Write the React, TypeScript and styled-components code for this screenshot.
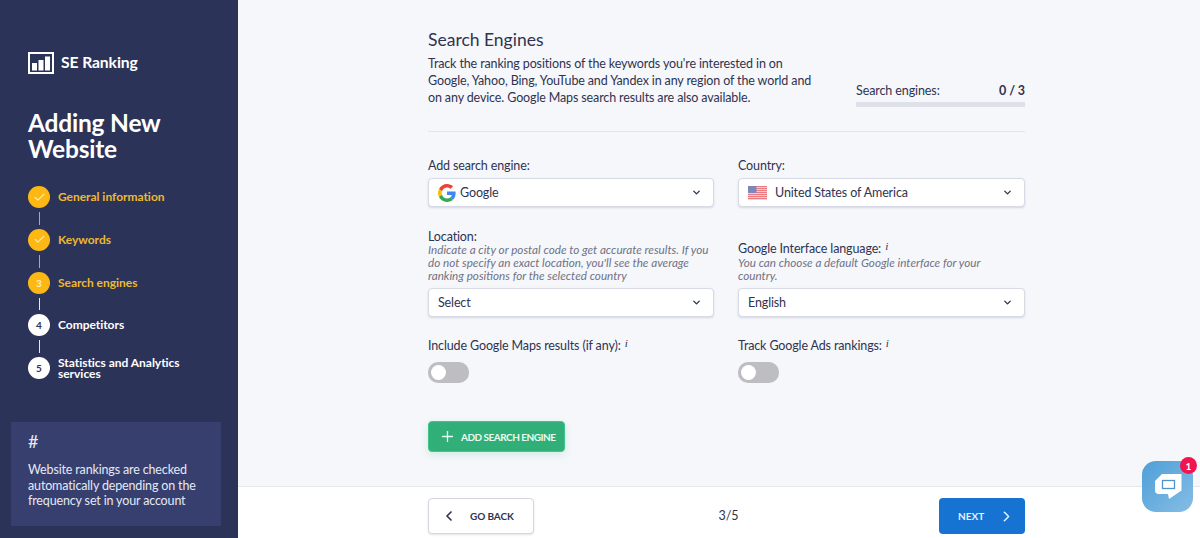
import React from 'react';
import styled, { createGlobalStyle } from 'styled-components';
import { ChevronDown, ChevronLeft, ChevronRight, Check, Plus } from 'lucide-react';

const GlobalStyle = createGlobalStyle`
  html, body, #root {
    height: 100%;
    margin: 0;
  }

  body {
    color: #2f3350;
    font-family: Lato, "Open Sans", sans-serif;
    overflow: hidden;
  }

  * {
    box-sizing: border-box;
  }
`;

const Page = styled.div`
  display: flex;
  height: 538px;
  position: relative;
  width: 1200px;
`;

const Sidebar = styled.aside`
  background: #2c3359;
  display: flex;
  flex: 0 0 238px;
  flex-direction: column;
  padding: 52px 17px 12px 11px;
`;

const Logo = styled.div`
  align-items: center;
  color: #fff;
  display: flex;
  font-size: 15.7px;
  font-weight: 700;
  gap: 7px;
  height: 22px;
  letter-spacing: -0.1px;
  margin-left: 17px;

  span {
    margin-top: -3px;
  }
`;

const Title = styled.h1`
  color: #fff;
  font-size: 24.5px;
  font-weight: 700;
  letter-spacing: -0.2px;
  line-height: 26px;
  margin: 36px 0 24px 17px;
`;

const Steps = styled.div`
  display: flex;
  flex-direction: column;
  margin-left: 17px;
`;

const Step = styled.div`
  align-items: center;
  display: flex;
  gap: 8px;
  height: 22px;
`;

const Bullet = styled.div<{ $active: boolean }>`
  align-items: center;
  background: ${(p) => (p.$active ? '#fdb813' : '#fff')};
  border-radius: 50%;
  color: ${(p) => (p.$active ? '#ffeec4' : '#2f3350')};
  display: flex;
  flex: 0 0 22px;
  font-size: 10px;
  font-weight: 700;
  height: 22px;
  justify-content: center;
`;

const StepLabel = styled.div<{ $active: boolean }>`
  color: ${(p) => (p.$active ? '#edb92f' : '#fff')};
  font-size: 12px;
  font-weight: 700;
  letter-spacing: -0.03px;
  line-height: 11px;
  margin-top: -1px;
`;

const Connector = styled.div<{ $active: boolean }>`
  background: ${(p) => (p.$active ? '#d9a92f' : '#e6e8f0')};
  height: 12.75px;
  margin: 4px 0 4px 10.5px;
  width: 1px;
`;

const InfoBox = styled.div`
  background: #363f6e;
  color: #e6e9f4;
  font-size: 12.5px;
  height: 104px;
  letter-spacing: -0.15px;
  line-height: 15.5px;
  margin-top: auto;
  padding: 9px 10px 0 17px;
  width: 210px;
`;

const Hash = styled.div`
  font-size: 18px;
  line-height: 20px;
  margin-bottom: 11px;
`;

const Main = styled.main`
  background: #f6f7fb;
  display: flex;
  flex: 1;
  flex-direction: column;
`;

const Content = styled.div`
  flex: 1;
  padding: 29px 0 0 190px;
  width: 787px;
`;

const Heading = styled.h2`
  font-size: 17.5px;
  font-weight: 400;
  line-height: 22px;
  margin: 0 0 4px;
`;

const Intro = styled.div`
  align-items: flex-end;
  border-bottom: 1px solid #e3e4ea;
  display: flex;
  justify-content: space-between;
  padding-bottom: 25px;
`;

const IntroText = styled.p`
  font-size: 12.5px;
  letter-spacing: -0.13px;
  line-height: 17px;
  margin: 0;
  width: 390px;
`;

const Quota = styled.div`
  font-size: 12.5px;
  letter-spacing: -0.1px;
  margin-bottom: -1px;
  width: 169px;
`;

const QuotaRow = styled.div`
  display: flex;
  justify-content: space-between;
  line-height: 16px;
  margin-bottom: 3px;

  b {
    font-weight: 700;
  }
`;

const QuotaBar = styled.div`
  background: #dfe1ea;
  height: 5px;
`;

const Fields = styled.div`
  display: grid;
  gap: 0 24px;
  grid-template-columns: 286px 287px;
`;

const Field = styled.div<{ $top: number; $height: number }>`
  display: flex;
  flex-direction: column;
  height: ${(p) => p.$height}px;
  justify-content: flex-end;
  margin-top: ${(p) => p.$top}px;
`;

const Label = styled.label`
  font-size: 12.5px;
  letter-spacing: -0.13px;
  line-height: 13px;
`;

const Hint = styled.span`
  color: #6f7285;
  font-size: 11.7px;
  font-style: italic;
  line-height: 13px;
  margin-bottom: 2px;
  max-width: 284px;
`;

const InfoMark = styled.i`
  font-family: "Liberation Serif", serif;
  font-size: 11px;
  margin-left: 4px;
  position: relative;
  top: -3px;
`;

const Select = styled.div`
  align-items: center;
  background: #fff;
  border: 1px solid #d8dae6;
  border-radius: 4px;
  box-shadow: 0 1px 2px rgba(60, 66, 100, 0.18);
  display: flex;
  font-size: 12.5px;
  height: 29px;
  letter-spacing: -0.13px;
  margin-top: 4px;
  padding: 0 11px 0 9px;

  ${Label} + & {
    margin-top: 6px;
  }

  svg.chevron {
    color: #2f3350;
    margin-left: auto;
  }
`;

const SelectIcon = styled.svg<{ $gap: number }>`
  flex: none;
  margin-right: ${(p) => p.$gap}px;
`;

const ToggleField = styled.div`
  font-size: 12.5px;
  height: 83px;
  letter-spacing: -0.13px;
  margin-top: 21px;
`;

const Toggle = styled.div`
  background: #bdbdc2;
  border-radius: 10px;
  height: 21px;
  margin-top: 9px;
  padding: 3px;
  width: 41px;

  &::before {
    background: #fff;
    border-radius: 50%;
    content: '';
    display: block;
    height: 15px;
    width: 15px;
  }
`;

const AddButton = styled.button`
  align-items: center;
  background: #30af78;
  border: 1px solid #3fc48c;
  border-radius: 4px;
  box-shadow: 0 3px 8px rgba(48, 175, 120, 0.18);
  color: #e9fbf2;
  display: flex;
  font-family: inherit;
  font-size: 10px;
  font-weight: 700;
  gap: 5px;
  height: 31px;
  letter-spacing: -0.5px;
  padding: 0 0 0 10px;
  white-space: nowrap;
  width: 137px;
`;

const Footer = styled.footer`
  align-items: flex-start;
  background: #fff;
  border-top: 1px solid #e8e8ec;
  display: flex;
  flex: 0 0 52px;
  justify-content: space-between;
  padding: 11px 175px 0 190px;
`;

const BackButton = styled.button`
  align-items: center;
  background: #fff;
  border: 1px solid #d6d7de;
  border-radius: 4px;
  box-shadow: 0 1px 2px rgba(60, 66, 100, 0.15);
  color: #2f3350;
  display: flex;
  font-family: inherit;
  font-size: 10px;
  font-weight: 700;
  gap: 13px;
  height: 36px;
  letter-spacing: -0.1px;
  padding: 0 0 0 12px;
  width: 106px;
`;

const Counter = styled.div`
  font-size: 12.5px;
  line-height: 36px;
  margin-left: -16px;
`;

const NextButton = styled.button`
  align-items: center;
  background: #1673d2;
  border: 0;
  border-radius: 4px;
  color: #e4f0ff;
  display: flex;
  font-family: inherit;
  font-size: 10px;
  font-weight: 700;
  gap: 14px;
  height: 36px;
  padding: 0 0 0 19px;
  width: 86px;
`;

const Chat = styled.div`
  align-items: center;
  background: linear-gradient(135deg, #4f9fd8, #85bde6);
  border-radius: 14px;
  bottom: 26px;
  display: flex;
  height: 51px;
  justify-content: center;
  position: absolute;
  right: 7px;
  width: 51px;
`;

const Badge = styled.div`
  align-items: center;
  background: #f0144f;
  border-radius: 50%;
  color: #fff;
  display: flex;
  font-size: 10px;
  font-weight: 700;
  height: 17px;
  justify-content: center;
  position: absolute;
  right: -4px;
  top: -4px;
  width: 17px;
`;

const steps = [
  { label: 'General information', mark: 'check', active: true },
  { label: 'Keywords', mark: 'check', active: true },
  { label: 'Search engines', mark: '3', active: true },
  { label: 'Competitors', mark: '4', active: false },
  { label: 'Statistics and Analytics services', mark: '5', active: false }
];

const LogoMark = () => (
  <svg width='26' height='22' viewBox='0 0 26 22'>
    <rect x='1' y='1' width='24' height='20' fill='none' stroke='#fff' strokeWidth='2' />
    <rect x='4' y='11' width='5' height='7.500' fill='#fff' />
    <rect x='10.500' y='8' width='5' height='10.500' fill='#fff' />
    <rect x='17' y='4.500' width='5' height='14' fill='#fff' />
  </svg>
);

const GoogleMark = () => (
  <SelectIcon $gap={4} width='18' height='18' viewBox='0 0 48 48'>
    <path fill='#ea4335' d='M24 9.500c3.500 0 6.700 1.200 9.200 3.600l6.900-6.900C35.900 2.400 30.500 0 24 0 14.600 0 6.500 5.400 2.600 13.200l8 6.200C12.500 13.700 17.800 9.500 24 9.500z' />
    <path fill='#4285f4' d='M47 24.500c0-1.600-.1-3.100-.4-4.500H24v9h12.900c-.6 3-2.200 5.500-4.700 7.200l7.700 6C44.400 37.900 47 31.800 47 24.500z' />
    <path fill='#fbbc05' d='M10.600 28.600c-.5-1.400-.8-3-.8-4.600s.3-3.200.8-4.600l-8-6.200C.9 16.500 0 20.100 0 24s.9 7.500 2.600 10.800l8-6.200z' />
    <path fill='#34a853' d='M24 48c6.500 0 11.900-2.100 15.900-5.800l-7.700-6c-2.200 1.400-4.900 2.300-8.200 2.300-6.200 0-11.500-4.200-13.400-9.900l-8 6.200C6.500 42.600 14.600 48 24 48z' />
  </SelectIcon>
);

const FlagMark = () => (
  <SelectIcon $gap={8} width='19' height='14' viewBox='0 0 19 14'>
    <rect width='19' height='14' fill='#f4f4f6' />
    {[0, 2, 4, 6, 8, 10, 12].map((y) => (
      <rect key={y} y={y} width='19' height='1.300' fill='#ea7a82' />
    ))}
    <rect width='8.500' height='7' fill='#7d88ba' />
  </SelectIcon>
);

const ChatMark = () => (
  <svg width='28' height='27' viewBox='0 0 28 27'>
    <path fill='#fff' d='M8 1h19.500v16.500L15 26l-1-5H4.500C2.500 21 1 19.500 1 17.500V8z' />
    <rect x='8.500' y='7.500' width='12' height='8' fill='none' stroke='#4f93c8' strokeWidth='1.300' />
  </svg>
);

const Chevron = () => <ChevronDown className='chevron' size={11} strokeWidth={3} />;

export default function App () {
  return (
    <Page>
      <GlobalStyle />
      <Sidebar>
        <Logo>
          <LogoMark />
          <span>SE Ranking</span>
        </Logo>
        <Title>Adding New<br />Website</Title>
        <Steps>
          {steps.map((step, index) => (
            <React.Fragment key={step.label}>
              <Step>
                <Bullet $active={step.active}>
                  {step.mark === 'check' ? <Check size={13} strokeWidth={2} /> : step.mark}
                </Bullet>
                <StepLabel $active={step.active}>{step.label}</StepLabel>
              </Step>
              {index < steps.length - 1 && <Connector $active={index < 2} />}
            </React.Fragment>
          ))}
        </Steps>
        <InfoBox>
          <Hash>#</Hash>
          Website rankings are checked automatically depending on the frequency set in your account
        </InfoBox>
      </Sidebar>
      <Main>
        <Content>
          <Heading>Search Engines</Heading>
          <Intro>
            <IntroText>
              Track the ranking positions of the keywords you're interested in on Google, Yahoo, Bing, YouTube and Yandex in any region of the world and on any device. Google Maps search results are also available.
            </IntroText>
            <Quota>
              <QuotaRow>
                <span>Search engines:</span>
                <b>0 / 3</b>
              </QuotaRow>
              <QuotaBar />
            </Quota>
          </Intro>
          <Fields>
            <Field $top={21} $height={54}>
              <Label>Add search engine:</Label>
              <Select>
                <GoogleMark />
                Google
                <Chevron />
              </Select>
            </Field>
            <Field $top={21} $height={54}>
              <Label>Country:</Label>
              <Select>
                <FlagMark />
                United States of America
                <Chevron />
              </Select>
            </Field>
            <Field $top={20} $height={90}>
              <Label>Location:</Label>
              <Hint>Indicate a city or postal code to get accurate results. If you do not specify an exact location, you'll see the average ranking positions for the selected country</Hint>
              <Select>
                Select
                <Chevron />
              </Select>
            </Field>
            <Field $top={20} $height={90}>
              <Label>Google Interface language:<InfoMark>i</InfoMark></Label>
              <Hint>You can choose a default Google interface for your country.</Hint>
              <Select>
                English
                <Chevron />
              </Select>
            </Field>
            <ToggleField>
              Include Google Maps results (if any):<InfoMark>i</InfoMark>
              <Toggle />
            </ToggleField>
            <ToggleField>
              Track Google Ads rankings:<InfoMark>i</InfoMark>
              <Toggle />
            </ToggleField>
          </Fields>
          <AddButton>
            <Plus size={17} strokeWidth={1.8} />
            ADD SEARCH ENGINE
          </AddButton>
        </Content>
        <Footer>
          <BackButton>
            <ChevronLeft size={16} strokeWidth={2.5} />
            GO BACK
          </BackButton>
          <Counter>3/5</Counter>
          <NextButton>
            NEXT
            <ChevronRight size={17} strokeWidth={2.2} />
          </NextButton>
        </Footer>
      </Main>
      <Chat>
        <ChatMark />
        <Badge>1</Badge>
      </Chat>
    </Page>
  );
}
